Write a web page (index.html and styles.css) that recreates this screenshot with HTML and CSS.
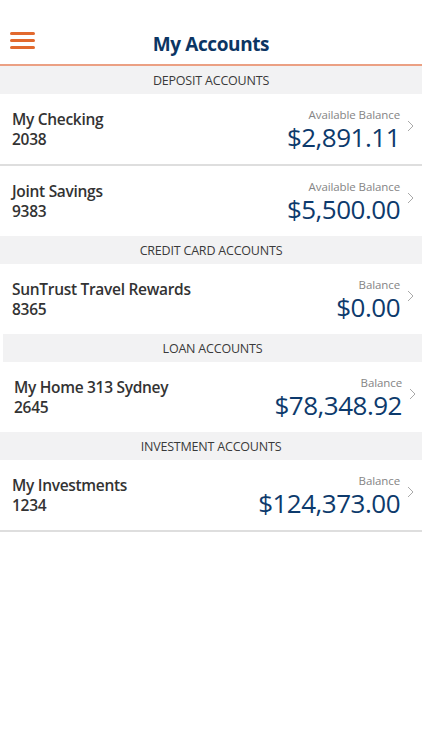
FILE: index.html
```html
<!DOCTYPE html>
<html lang="en">
<head>
<meta charset="utf-8">
<title>My Accounts</title>
<link rel="stylesheet" href="styles.css">
</head>
<body>
<header class="topbar">
  <button class="menu" aria-label="Menu">
    <span class="bar"></span><span class="bar"></span><span class="bar"></span>
  </button>
  <h1 class="title">My Accounts</h1>
  <span class="spacer"></span>
</header>
<main class="list">
  <div class="section first">DEPOSIT ACCOUNTS</div>
  <a class="row bordered">
    <div class="acct"><div class="name">My Checking</div><div class="num">2038</div></div>
    <div class="bal"><div class="label">Available Balance</div><div class="amount">$2,891.11</div></div>
    <svg class="chev" width="7" height="12" viewBox="0 0 7 12"><path d="M1 1 L6 6 L1 11" fill="none" stroke="#a9a9a9" stroke-width="1"/></svg>
  </a>
  <a class="row">
    <div class="acct"><div class="name">Joint Savings</div><div class="num">9383</div></div>
    <div class="bal"><div class="label">Available Balance</div><div class="amount">$5,500.00</div></div>
    <svg class="chev" width="7" height="12" viewBox="0 0 7 12"><path d="M1 1 L6 6 L1 11" fill="none" stroke="#a9a9a9" stroke-width="1"/></svg>
  </a>
  <div class="section">CREDIT CARD ACCOUNTS</div>
  <a class="row">
    <div class="acct"><div class="name">SunTrust Travel Rewards</div><div class="num">8365</div></div>
    <div class="bal"><div class="label">Balance</div><div class="amount">$0.00</div></div>
    <svg class="chev" width="7" height="12" viewBox="0 0 7 12"><path d="M1 1 L6 6 L1 11" fill="none" stroke="#a9a9a9" stroke-width="1"/></svg>
  </a>
  <div class="section shifted">LOAN ACCOUNTS</div>
  <a class="row shifted-row">
    <div class="acct"><div class="name">My Home 313 Sydney</div><div class="num">2645</div></div>
    <div class="bal"><div class="label">Balance</div><div class="amount">$78,348.92</div></div>
    <svg class="chev" width="7" height="12" viewBox="0 0 7 12"><path d="M1 1 L6 6 L1 11" fill="none" stroke="#a9a9a9" stroke-width="1"/></svg>
  </a>
  <div class="section">INVESTMENT ACCOUNTS</div>
  <a class="row bordered">
    <div class="acct"><div class="name">My Investments</div><div class="num">1234</div></div>
    <div class="bal"><div class="label">Balance</div><div class="amount">$124,373.00</div></div>
    <svg class="chev" width="7" height="12" viewBox="0 0 7 12"><path d="M1 1 L6 6 L1 11" fill="none" stroke="#a9a9a9" stroke-width="1"/></svg>
  </a>
</main>
</body>
</html>
```
FILE: styles.css
```css
* { box-sizing: border-box; }
html, body { margin: 0; padding: 0; background: #fff; }
body { font-family: "Open Sans", "Noto Sans", sans-serif; color: #333; width: 422px; }

.topbar {
  height: 66px;
  display: grid;
  grid-template-columns: 1fr auto 1fr;
  align-items: center;
  padding: 20px 10px 0 10px;
  border-bottom: 2px solid #eba083;
}
.menu {
  justify-self: start;
  background: none; border: 0; padding: 0;
  display: flex; flex-direction: column; gap: 4px;
  width: 25px;
  margin-top: -4px;
}
.bar { display: block; height: 3px; width: 25px; background: #e2692e; border-radius: 1.5px; }
.title {
  margin: 0;
  margin-top: 4px;
  font-size: 19px;
  font-weight: 700;
  letter-spacing: -0.4px;
  color: #0b3563;
}

.section {
  height: 28px;
  background: #f2f2f3;
  display: flex; align-items: center; justify-content: center;
  font-size: 12.5px;
  letter-spacing: -0.2px;
  color: #3a3a3a;
}
.section.shifted { margin-left: 3px; }

.row {
  display: flex;
  align-items: center;
  height: 70px;
  padding: 0 8px 0 12px;
  text-decoration: none;
  color: inherit;
}
.row.bordered { height: 72px; border-bottom: 2px solid #dedede; }
.row.shifted-row { padding-left: 14px; padding-right: 6px; }

.acct { flex: 1; }
.name, .num { font-size: 15.5px; font-weight: 600; line-height: 20px; letter-spacing: -0.3px; color: #333; }

.bal { text-align: right; }
.label { font-size: 11.5px; color: #858585; line-height: 15px; letter-spacing: -0.1px; }
.amount { font-size: 26px; font-weight: 400; color: #0d3a6c; line-height: 30px; letter-spacing: -0.5px; }

.chev { margin-left: 7px; margin-top: -6px; }
```
